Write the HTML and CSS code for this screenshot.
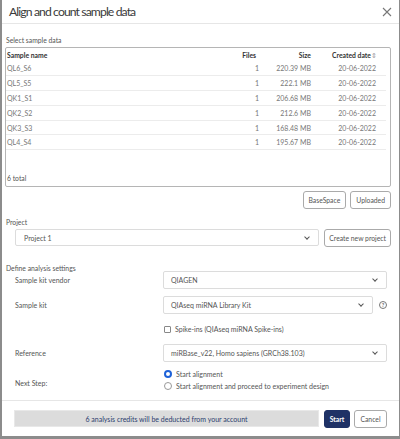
FILE: index.html
```html
<!DOCTYPE html>
<html lang="en">
<head>
  <meta charset="UTF-8">
  <title>Align and count sample data</title>
  <link rel="stylesheet" href="styles.css">
</head>
<body>

  <div class="dialog">

    <!-- Header -->
    <div class="dialog-header">
      <div class="dialog-title">Align and count sample data</div>
      <svg class="close" width="10" height="10" viewBox="0 0 10 10">
        <path d="M1 1 L9 9 M9 1 L1 9" stroke="#777" stroke-width="1.1" fill="none"/>
      </svg>
    </div>

    <div class="dialog-body">

      <!-- Sample data -->
      <div class="section-label">Select sample data</div>
      <div class="sample-box">
        <table class="sample-table">
          <thead>
            <tr>
              <th class="col-name">Sample name</th>
              <th class="col-files">Files</th>
              <th class="col-size">Size</th>
              <th class="col-date">Created date <span class="sort">&#8661;</span></th>
            </tr>
          </thead>
          <tbody>
            <tr><td>QL6_S6</td><td class="num">1</td><td class="num">220.39 MB</td><td class="num date">20-06-2022</td></tr>
            <tr><td>QL5_S5</td><td class="num">1</td><td class="num">222.1 MB</td><td class="num date">20-06-2022</td></tr>
            <tr><td>QK1_S1</td><td class="num">1</td><td class="num">206.68 MB</td><td class="num date">20-06-2022</td></tr>
            <tr><td>QK2_S2</td><td class="num">1</td><td class="num">212.6 MB</td><td class="num date">20-06-2022</td></tr>
            <tr><td>QK3_S3</td><td class="num">1</td><td class="num">168.48 MB</td><td class="num date">20-06-2022</td></tr>
            <tr><td>QL4_S4</td><td class="num">1</td><td class="num">195.67 MB</td><td class="num date">20-06-2022</td></tr>
          </tbody>
        </table>
        <div class="total">6 total</div>
      </div>

      <div class="source-buttons">
        <button class="btn">BaseSpace</button>
        <button class="btn">Uploaded</button>
      </div>

      <!-- Project -->
      <div class="section-label project-label">Project</div>
      <div class="project-row">
        <div class="select project-select">
          <span>Project 1</span>
          <span class="chevron"></span>
        </div>
        <button class="btn new-project">Create new project</button>
      </div>

      <!-- Analysis settings -->
      <div class="section-label settings-label">Define analysis settings</div>
      <div class="settings">
        <div class="setting-row vendor-row">
          <div class="setting-name">Sample kit vendor</div>
          <div class="select wide">
            <span>QIAGEN</span>
            <span class="chevron"></span>
          </div>
        </div>

        <div class="setting-row kit-row">
          <div class="setting-name">Sample kit</div>
          <div class="select kit">
            <span>QIAseq miRNA Library Kit</span>
            <span class="chevron"></span>
          </div>
          <span class="help">?</span>
        </div>

        <div class="setting-row check-row">
          <div class="setting-name"></div>
          <label class="check"><span class="box"></span>Spike-ins (QIAseq miRNA Spike-ins)</label>
        </div>

        <div class="setting-row ref-row">
          <div class="setting-name">Reference</div>
          <div class="select wide">
            <span>miRBase_v22, Homo sapiens (GRCh38.103)</span>
            <span class="chevron"></span>
          </div>
        </div>

        <div class="setting-row next-row">
          <div class="setting-name">Next Step:</div>
          <div class="radios">
            <label class="radio"><span class="dot on"></span>Start alignment</label>
            <label class="radio"><span class="dot"></span>Start alignment and proceed to experiment design</label>
          </div>
        </div>
      </div>
    </div>

    <!-- Footer -->
    <div class="dialog-footer">
      <div class="credits">6 analysis credits will be deducted from your account</div>
      <button class="btn start">Start</button>
      <button class="btn cancel">Cancel</button>
    </div>
  </div>

</body>
</html>
```

FILE: styles.css
```css
* {
  box-sizing: border-box;
}

body {
  margin: 0;
  background: #8c8c8c;
  font-family: Lato, "Noto Sans", sans-serif;
  color: #444;
}

.dialog {
  background: #fff;
  margin: 0 1px 0 2px;
  height: 436px;
  display: flex;
  flex-direction: column;
}

/* Header */
.dialog-header {
  height: 24px;
  flex-shrink: 0;
  display: flex;
  align-items: center;
  justify-content: space-between;
  padding: 0 7px 0 7px;
  border-bottom: 1px solid #e6e6e6;
}

.dialog-title {
  font-size: 12.2px;
  font-weight: 400;
  color: #3a3a3a;
  letter-spacing: -0.9px;
}

.close {
  margin-top: 1px;
}

/* Body */
.dialog-body {
  padding: 12px 8px 0 3px;
  flex: 1;
}

.section-label {
  font-size: 6.8px;
  color: #555;
  padding-left: 1px;
  margin-bottom: 2px;
  line-height: 9px;
}

.sample-box {
  border: 1px solid #b5b5b5;
  border-radius: 2px;
  height: 140px;
  display: flex;
  flex-direction: column;
  justify-content: space-between;
}

.sample-table {
  width: 380px;
  border-collapse: collapse;
  font-size: 7px;
}

.sample-table th {
  font-weight: 700;
  font-size: 6.8px;
  color: #333;
  height: 13px;
  text-align: right;
  padding: 0;
}

.sample-table th.col-name {
  text-align: left;
  padding-left: 1px;
}

.col-files {
  width: 30px;
  padding-right: 3px !important;
}

.col-size {
  width: 52px;
}

.col-date {
  width: 75px;
  padding-right: 15px !important;
  position: relative;
}

.sort {
  position: absolute;
  right: 9px;
  color: #999;
  font-weight: 400;
}

.sample-table td {
  height: 14.8px;
  color: #777;
  border-bottom: 1px solid #ececec;
  padding: 0 0 0 1px;
}

.sample-table td.num {
  text-align: right;
}

.sample-table td.date {
  padding-right: 10px;
}

.total {
  font-size: 6.8px;
  color: #555;
  padding: 0 0 4px 1px;
}

.source-buttons {
  display: flex;
  justify-content: flex-end;
  gap: 4px;
  margin-top: 4px;
}

.btn {
  font-family: inherit;
  font-size: 6.8px;
  color: #555;
  background: #fff;
  border: 1px solid #aaa;
  border-radius: 3px;
  height: 18px;
  padding: 0 5px;
  cursor: pointer;
}

.project-label {
  margin-top: 9px;
}

.project-row {
  display: flex;
  gap: 5px;
  padding-left: 10px;
}

.select {
  border: 1px solid #dcdcdc;
  border-radius: 2px;
  height: 18px;
  display: flex;
  align-items: center;
  justify-content: space-between;
  padding: 0 9px 0 7px;
  font-size: 7px;
  color: #555;
}

.project-select {
  flex: 1;
  height: 17px;
  padding-left: 8px;
}

.btn.new-project {
  padding: 0 4px;
}

.chevron {
  width: 4px;
  height: 4px;
  border-right: 1px solid #555;
  border-bottom: 1px solid #555;
  transform: rotate(45deg);
  margin-top: -2px;
}

.settings-label {
  margin-top: 17px;
  margin-bottom: -2px;
}

/* Settings */
.settings {
  padding-left: 10px;
}

.setting-row {
  display: flex;
  align-items: center;
}

.vendor-row {
  height: 18px;
}

.kit-row {
  height: 32px;
}

.check-row {
  height: 16px;
}

.ref-row {
  height: 32px;
}

.next-row {
  height: 22px;
}

.setting-name {
  width: 148px;
  flex-shrink: 0;
  font-size: 7px;
  color: #555;
}

.select.wide {
  width: 224px;
}

.select.kit {
  width: 210px;
}

.help {
  width: 8px;
  height: 8px;
  border: 1px solid #777;
  border-radius: 50%;
  font-size: 5.5px;
  font-weight: 700;
  color: #666;
  display: flex;
  align-items: center;
  justify-content: center;
  margin-left: 6px;
}

.check {
  display: flex;
  align-items: center;
  font-size: 7px;
  color: #555;
  padding-left: 1px;
}

.box {
  width: 7px;
  height: 7px;
  border: 1px solid #888;
  border-radius: 1px;
  margin-right: 4px;
}

.next-row .setting-name {
  padding-top: 5px;
}

.radios {
  display: flex;
  flex-direction: column;
  gap: 4px;
}

.radio {
  display: flex;
  align-items: center;
  font-size: 7px;
  color: #555;
  padding-left: 1px;
}

.dot {
  width: 8px;
  height: 8px;
  border: 1px solid #999;
  border-radius: 50%;
  margin-right: 4px;
}

.dot.on {
  border: 2.5px solid #1e62d8;
}

/* Footer */
.dialog-footer {
  border-top: 1px solid #e6e6e6;
  height: 36px;
  flex-shrink: 0;
  display: flex;
  align-items: center;
  gap: 4px;
  padding: 0 12px 0 12px;
}

.credits {
  flex: 1;
  height: 17px;
  background: #dcdcdc;
  border: 1px solid #e8e8e8;
  display: flex;
  align-items: center;
  justify-content: center;
  font-size: 7px;
  color: #2c3c6e;
  margin-right: 1px;
}

.btn.start {
  background: #1f3266;
  border-color: #1f3266;
  color: #fff;
  font-weight: 700;
  width: 26px;
  padding: 0;
}

.btn.cancel {
  width: 33px;
  padding: 0;
}
```
